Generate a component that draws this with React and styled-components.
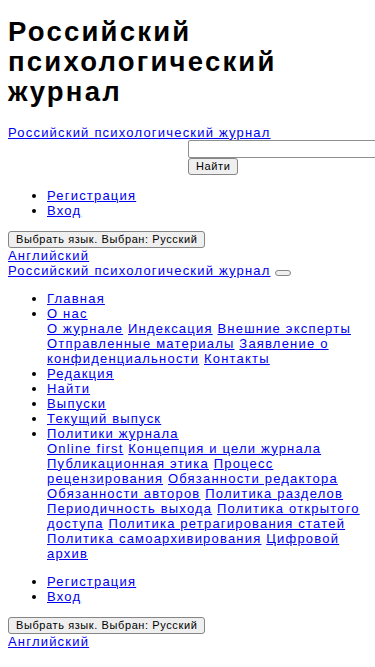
import React from 'react';
import styled, { createGlobalStyle } from 'styled-components';

const GlobalStyle = createGlobalStyle`
  body {
    margin: 0;
    padding: 0 8px 8px;
    font-family: "Liberation Sans", Arial, sans-serif;
    font-size: 13px;
    line-height: 15px;
    letter-spacing: 1.2px;
    color: #000;
    background: #fff;
  }
`

const Title = styled.h1`
  font-size: 27.5px;
  line-height: 30px;
  font-weight: bold;
  letter-spacing: 2.2px;
  margin: 17.4px 0;
`

const Link = styled.a`
  color: #0000ee;
  text-decoration: underline;
`

const Block = styled.div`
  display: block;
`

const SearchForm = styled.form`
  display: flex;
  flex-direction: column;
  align-items: flex-start;
  margin-left: 180px;
`

const SearchInput = styled.input`
  box-sizing: border-box;
  width: 220px;
  height: 18px;
  margin: 0;
  padding: 1px 2px;
  border: 1px solid #8f8f8f;
  border-radius: 2px;
  background: #fff;
`

const Btn = styled.button`
  box-sizing: border-box;
  height: ${p => (p.$tiny ? '6px' : '17px')};
  width: ${p => (p.$tiny ? '16px' : 'auto')};
  margin: 0;
  padding: ${p => (p.$tiny ? '0' : '0 7px')};
  font-family: "Liberation Sans", Arial, sans-serif;
  font-size: 11px;
  letter-spacing: 0.6px;
  line-height: 15px;
  color: #000;
  background: #efefef;
  border: 1px solid #858585;
  border-radius: 3px;
  vertical-align: ${p => (p.$tiny ? 'baseline' : 'top')};
`

const List = styled.ul`
  margin: 13px 0;
  padding-left: 39px;
  list-style: disc;
`

const Item = styled.li`
  line-height: 15px;
`

const SubLinks = styled.div`
  display: block;
`

const LangSwitch = () => (
  <Block>
    <Btn type="button">Выбрать язык. Выбран: Русский</Btn>
    <Block>
      <Link href="#">Английский</Link>
    </Block>
  </Block>
)

const UserMenu = () => (
  <List>
    <Item><Link href="#">Регистрация</Link></Item>
    <Item><Link href="#">Вход</Link></Item>
  </List>
)

const aboutLinks = ['О журнале', 'Индексация', 'Внешние эксперты', 'Отправленные материалы', 'Заявление о конфиденциальности', 'Контакты']

const policyLinks = [
  'Online first', 'Концепция и цели журнала', 'Публикационная этика', 'Процесс рецензирования',
  'Обязанности редактора', 'Обязанности авторов', 'Политика разделов', 'Периодичность выхода',
  'Политика открытого доступа', 'Политика ретрагирования статей', 'Политика самоархивирования',
  'Цифровой архив',
]

function Sub({ links }) {
  return (
    <SubLinks>
      {links.map((l, i) => (
        <React.Fragment key={l}>
          {i > 0 && ' '}
          <Link href="#">{l}</Link>
        </React.Fragment>
      ))}
    </SubLinks>
  )
}

export default function App() {
  return (
    <>
      <GlobalStyle />
      <Title>Российский психологический журнал</Title>
      <Block>
        <Link href="#">Российский психологический журнал</Link>
      </Block>
      <SearchForm onSubmit={e => e.preventDefault()}>
        <SearchInput type="text" />
        <Btn type="submit">Найти</Btn>
      </SearchForm>
      <UserMenu />
      <LangSwitch />
      <Block>
        <Link href="#">Российский психологический журнал</Link> <Btn $tiny type="button" aria-label="Меню" />
      </Block>
      <List>
        <Item><Link href="#">Главная</Link></Item>
        <Item>
          <Link href="#">О нас</Link>
          <Sub links={aboutLinks} />
        </Item>
        <Item><Link href="#">Редакция</Link></Item>
        <Item><Link href="#">Найти</Link></Item>
        <Item><Link href="#">Выпуски</Link></Item>
        <Item><Link href="#">Текущий выпуск</Link></Item>
        <Item>
          <Link href="#">Политики журнала</Link>
          <Sub links={policyLinks} />
        </Item>
      </List>
      <UserMenu />
      <LangSwitch />
    </>
  )
}
